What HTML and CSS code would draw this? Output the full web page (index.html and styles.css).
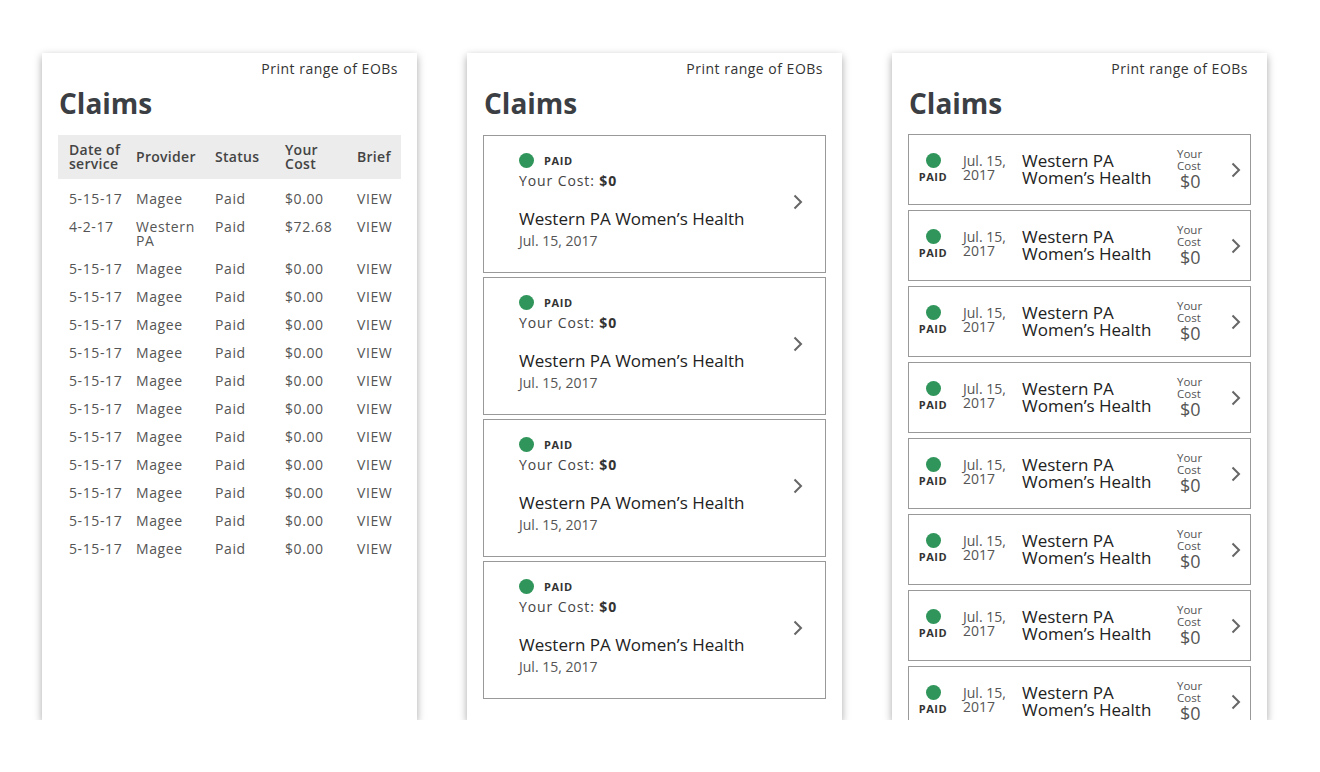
FILE: index.html
```html
<!DOCTYPE html>
<html lang="en">
<head>
<meta charset="utf-8">
<title>Claims</title>
<link rel="stylesheet" href="styles.css">
</head>
<body>
<div class="screens">

  <section class="phone">
    <div class="print">Print range of EOBs</div>
    <h1 class="title">Claims</h1>
    <div class="table">
      <div class="thead">
        <div>Date of<br>service</div><div>Provider</div><div>Status</div><div>Your<br>Cost</div><div>Brief</div>
      </div>
      <div class="tbody">
        <div class="tr"><div>5-15-17</div><div>Magee</div><div>Paid</div><div>$0.00</div><div>VIEW</div></div>
        <div class="tr"><div>4-2-17</div><div>Western<br>PA</div><div>Paid</div><div>$72.68</div><div>VIEW</div></div>
        <div class="tr"><div>5-15-17</div><div>Magee</div><div>Paid</div><div>$0.00</div><div>VIEW</div></div>
        <div class="tr"><div>5-15-17</div><div>Magee</div><div>Paid</div><div>$0.00</div><div>VIEW</div></div>
        <div class="tr"><div>5-15-17</div><div>Magee</div><div>Paid</div><div>$0.00</div><div>VIEW</div></div>
        <div class="tr"><div>5-15-17</div><div>Magee</div><div>Paid</div><div>$0.00</div><div>VIEW</div></div>
        <div class="tr"><div>5-15-17</div><div>Magee</div><div>Paid</div><div>$0.00</div><div>VIEW</div></div>
        <div class="tr"><div>5-15-17</div><div>Magee</div><div>Paid</div><div>$0.00</div><div>VIEW</div></div>
        <div class="tr"><div>5-15-17</div><div>Magee</div><div>Paid</div><div>$0.00</div><div>VIEW</div></div>
        <div class="tr"><div>5-15-17</div><div>Magee</div><div>Paid</div><div>$0.00</div><div>VIEW</div></div>
        <div class="tr"><div>5-15-17</div><div>Magee</div><div>Paid</div><div>$0.00</div><div>VIEW</div></div>
        <div class="tr"><div>5-15-17</div><div>Magee</div><div>Paid</div><div>$0.00</div><div>VIEW</div></div>
        <div class="tr"><div>5-15-17</div><div>Magee</div><div>Paid</div><div>$0.00</div><div>VIEW</div></div>
      </div>
    </div>
  </section>

  <section class="phone">
    <div class="print">Print range of EOBs</div>
    <h1 class="title">Claims</h1>
    <div class="cards">
      <div class="card">
        <div class="card-body">
          <div class="status"><span class="dot"></span><span class="paid">PAID</span></div>
          <div class="cost">Your Cost: <b>$0</b></div>
          <div class="name">Western PA Women’s Health</div>
          <div class="date">Jul. 15, 2017</div>
        </div>
        <svg class="chev" width="10" height="16" viewBox="0 0 10 16"><path d="M1.5 1.5 L8 8 L1.5 14.5" fill="none" stroke="#666" stroke-width="2"/></svg>
      </div>
      <div class="card">
        <div class="card-body">
          <div class="status"><span class="dot"></span><span class="paid">PAID</span></div>
          <div class="cost">Your Cost: <b>$0</b></div>
          <div class="name">Western PA Women’s Health</div>
          <div class="date">Jul. 15, 2017</div>
        </div>
        <svg class="chev" width="10" height="16" viewBox="0 0 10 16"><path d="M1.5 1.5 L8 8 L1.5 14.5" fill="none" stroke="#666" stroke-width="2"/></svg>
      </div>
      <div class="card">
        <div class="card-body">
          <div class="status"><span class="dot"></span><span class="paid">PAID</span></div>
          <div class="cost">Your Cost: <b>$0</b></div>
          <div class="name">Western PA Women’s Health</div>
          <div class="date">Jul. 15, 2017</div>
        </div>
        <svg class="chev" width="10" height="16" viewBox="0 0 10 16"><path d="M1.5 1.5 L8 8 L1.5 14.5" fill="none" stroke="#666" stroke-width="2"/></svg>
      </div>
      <div class="card">
        <div class="card-body">
          <div class="status"><span class="dot"></span><span class="paid">PAID</span></div>
          <div class="cost">Your Cost: <b>$0</b></div>
          <div class="name">Western PA Women’s Health</div>
          <div class="date">Jul. 15, 2017</div>
        </div>
        <svg class="chev" width="10" height="16" viewBox="0 0 10 16"><path d="M1.5 1.5 L8 8 L1.5 14.5" fill="none" stroke="#666" stroke-width="2"/></svg>
      </div>
    </div>
  </section>

  <section class="phone">
    <div class="print">Print range of EOBs</div>
    <h1 class="title">Claims</h1>
    <div class="rows">
      <div class="row"><div class="r-status"><span class="dot"></span><span class="paid">PAID</span></div><div class="r-date">Jul. 15,<br>2017</div><div class="r-name">Western PA<br>Women’s Health</div><div class="r-cost"><span class="lbl">Your<br>Cost</span><span class="amt">$0</span></div><svg class="chev" width="10" height="16" viewBox="0 0 10 16"><path d="M1.5 1.5 L8 8 L1.5 14.5" fill="none" stroke="#666" stroke-width="2"/></svg></div>
      <div class="row"><div class="r-status"><span class="dot"></span><span class="paid">PAID</span></div><div class="r-date">Jul. 15,<br>2017</div><div class="r-name">Western PA<br>Women’s Health</div><div class="r-cost"><span class="lbl">Your<br>Cost</span><span class="amt">$0</span></div><svg class="chev" width="10" height="16" viewBox="0 0 10 16"><path d="M1.5 1.5 L8 8 L1.5 14.5" fill="none" stroke="#666" stroke-width="2"/></svg></div>
      <div class="row"><div class="r-status"><span class="dot"></span><span class="paid">PAID</span></div><div class="r-date">Jul. 15,<br>2017</div><div class="r-name">Western PA<br>Women’s Health</div><div class="r-cost"><span class="lbl">Your<br>Cost</span><span class="amt">$0</span></div><svg class="chev" width="10" height="16" viewBox="0 0 10 16"><path d="M1.5 1.5 L8 8 L1.5 14.5" fill="none" stroke="#666" stroke-width="2"/></svg></div>
      <div class="row"><div class="r-status"><span class="dot"></span><span class="paid">PAID</span></div><div class="r-date">Jul. 15,<br>2017</div><div class="r-name">Western PA<br>Women’s Health</div><div class="r-cost"><span class="lbl">Your<br>Cost</span><span class="amt">$0</span></div><svg class="chev" width="10" height="16" viewBox="0 0 10 16"><path d="M1.5 1.5 L8 8 L1.5 14.5" fill="none" stroke="#666" stroke-width="2"/></svg></div>
      <div class="row"><div class="r-status"><span class="dot"></span><span class="paid">PAID</span></div><div class="r-date">Jul. 15,<br>2017</div><div class="r-name">Western PA<br>Women’s Health</div><div class="r-cost"><span class="lbl">Your<br>Cost</span><span class="amt">$0</span></div><svg class="chev" width="10" height="16" viewBox="0 0 10 16"><path d="M1.5 1.5 L8 8 L1.5 14.5" fill="none" stroke="#666" stroke-width="2"/></svg></div>
      <div class="row"><div class="r-status"><span class="dot"></span><span class="paid">PAID</span></div><div class="r-date">Jul. 15,<br>2017</div><div class="r-name">Western PA<br>Women’s Health</div><div class="r-cost"><span class="lbl">Your<br>Cost</span><span class="amt">$0</span></div><svg class="chev" width="10" height="16" viewBox="0 0 10 16"><path d="M1.5 1.5 L8 8 L1.5 14.5" fill="none" stroke="#666" stroke-width="2"/></svg></div>
      <div class="row"><div class="r-status"><span class="dot"></span><span class="paid">PAID</span></div><div class="r-date">Jul. 15,<br>2017</div><div class="r-name">Western PA<br>Women’s Health</div><div class="r-cost"><span class="lbl">Your<br>Cost</span><span class="amt">$0</span></div><svg class="chev" width="10" height="16" viewBox="0 0 10 16"><path d="M1.5 1.5 L8 8 L1.5 14.5" fill="none" stroke="#666" stroke-width="2"/></svg></div>
      <div class="row"><div class="r-status"><span class="dot"></span><span class="paid">PAID</span></div><div class="r-date">Jul. 15,<br>2017</div><div class="r-name">Western PA<br>Women’s Health</div><div class="r-cost"><span class="lbl">Your<br>Cost</span><span class="amt">$0</span></div><svg class="chev" width="10" height="16" viewBox="0 0 10 16"><path d="M1.5 1.5 L8 8 L1.5 14.5" fill="none" stroke="#666" stroke-width="2"/></svg></div>
    </div>
  </section>

</div>
</body>
</html>
```

FILE: styles.css
```css
* { box-sizing: border-box; }
html, body { margin: 0; padding: 0; background: #fff; }
body {
  font-family: "Open Sans", "Lato", sans-serif;
  color: #333;
}
.screens {
  display: flex;
  gap: 50px;
  padding: 53px 0 0 42px;
}
.phone {
  width: 375px;
  height: 667px;
  overflow: hidden;
  background: #fff;
  box-shadow: 0 3px 8px rgba(0, 0, 0, 0.35);
  padding: 0 16px;
  display: flex;
  flex-direction: column;
}
.print {
  text-align: right;
  font-size: 14px;
  line-height: 20px;
  padding: 6px 3px 0 0;
  color: #333;
  letter-spacing: 0.5px;
}
.title {
  margin: 7px 0 0;
  font-size: 28px;
  line-height: 34px;
  font-weight: 700;
  color: #3b3f44;
  padding-left: 1px;
}

/* table */
.table { margin-top: 15px; }
.thead, .tr {
  display: grid;
  grid-template-columns: 67px 79px 70px 72px 1fr;
  padding-left: 11px;
  font-size: 14px;
  line-height: 14px;
}
.thead {
  background: #ececec;
  height: 44px;
  align-items: center;
  font-weight: 600;
  color: #444;
  letter-spacing: 0.3px;
}
.tbody { margin-top: 6px; }
.tr {
  padding: 7px 0 7px 11px;
  color: #555;
  letter-spacing: 0.6px;
}

/* cards (screen 2) */
.cards {
  margin-top: 15px;
  display: flex;
  flex-direction: column;
  gap: 4px;
}
.card {
  height: 138px;
  border: 1px solid #999;
  display: flex;
  align-items: flex-start;
  padding: 17px 22px 0 35px;
}
.card-body { flex: 1; }
.status {
  display: flex;
  align-items: center;
  height: 15px;
  gap: 10px;
}
.dot {
  width: 15px;
  height: 15px;
  border-radius: 50%;
  background: #2f955a;
  flex: none;
}
.paid {
  font-size: 11px;
  font-weight: 700;
  letter-spacing: 0.6px;
  color: #333;
}
.cost {
  margin-top: 3px;
  font-size: 14px;
  line-height: 20px;
  letter-spacing: 0.9px;
  color: #444;
}
.cost b { color: #333; }
.name {
  margin-top: 17px;
  font-size: 17px;
  line-height: 22px;
  color: #222;
}
.date {
  font-size: 14px;
  line-height: 20px;
  color: #555;
  margin-top: 1px;
}
.card .chev { margin-top: 41px; flex: none; }

/* rows (screen 3) */
.rows {
  margin-top: 14px;
  display: flex;
  flex-direction: column;
  gap: 5px;
}
.row {
  flex: none;
  height: 71px;
  border: 1px solid #999;
  display: flex;
  align-items: center;
}
.r-status {
  width: 48px;
  flex: none;
  display: flex;
  flex-direction: column;
  align-items: center;
  gap: 3px;
  margin-top: -3px;
}
.r-status .paid { line-height: 12px; }
.r-date {
  width: 65px;
  padding-left: 6px;
  flex: none;
  font-size: 14px;
  line-height: 14px;
  color: #555;
  margin-top: -4px;
}
.r-name {
  width: 155px;
  flex: none;
  font-size: 17px;
  line-height: 17px;
  color: #222;
  margin-top: -2px;
}
.r-cost {
  width: 54px;
  flex: none;
  display: flex;
  flex-direction: column;
  color: #555;
  margin-top: -2px;
}
.r-cost .lbl { font-size: 11.5px; line-height: 12px; }
.r-cost .amt { font-size: 18px; line-height: 18px; padding-left: 3px; }
.row .chev { flex: none; }
```
